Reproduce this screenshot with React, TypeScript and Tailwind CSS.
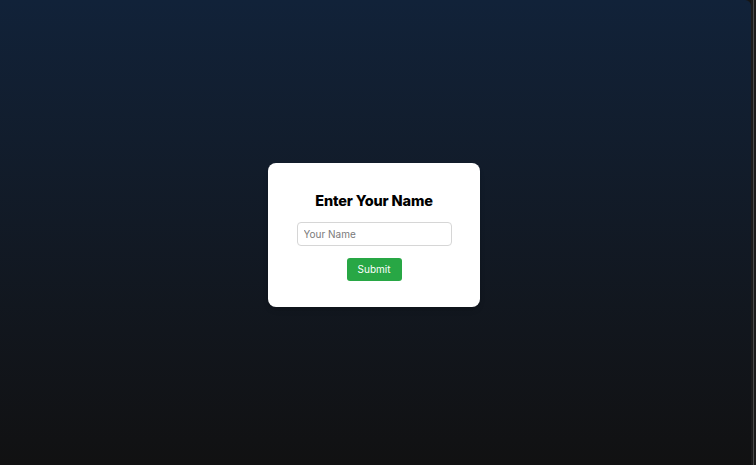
import React, { useState } from 'react';

export default function App() {
  const [name, setName] = useState('');

  return (
    <div className="flex h-[465px] w-full bg-[#151515]" style={{ fontFamily: 'Inter, "Noto Sans", sans-serif' }}>
      <main className="flex flex-1 items-center justify-center rounded-tr-[6px] bg-gradient-to-b from-[#112239] to-[#111112] pt-[5px] pr-[3px]">
        <form
          className="flex w-[212px] flex-col items-center rounded-lg bg-white pt-[26px] pb-[26px] shadow-md"
          onSubmit={(e) => e.preventDefault()}
        >
          <h1 className="mb-[9px] text-[14.5px] leading-6 font-extrabold tracking-[-0.01em] text-black">Enter Your Name</h1>
          <input
            className="mb-3 h-6 w-[155px] rounded border border-[#d6d6d6] px-[6px] text-[10px] text-gray-800 placeholder:text-[#7a7a7a] focus:outline-none"
            placeholder="Your Name"
            value={name}
            onChange={(e) => setName(e.target.value)}
          />
          <button
            className="h-[23px] w-[55px] rounded-[3px] bg-[#28a745] text-[10px] text-white"
            type="submit"
          >
            Submit
          </button>
        </form>
      </main>
      <div className="flex w-[5px]">
        <div className="w-[2px] bg-[#1b1b1b]" />
        <div className="w-px bg-[#4a4a4a]" />
        <div className="w-[2px] bg-[#1b1b1b]" />
      </div>
    </div>
  );
}
